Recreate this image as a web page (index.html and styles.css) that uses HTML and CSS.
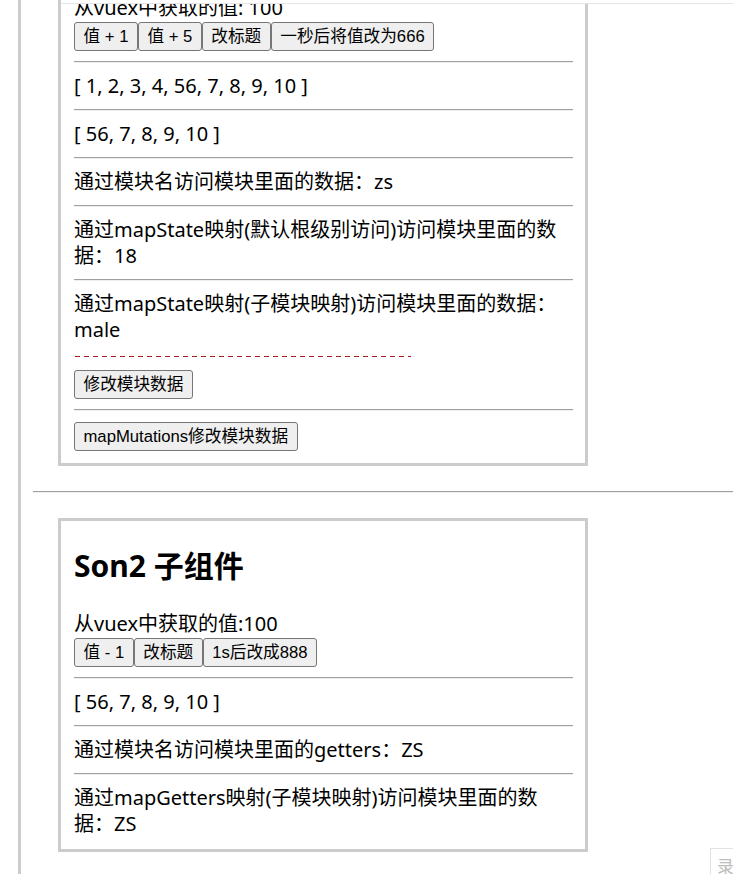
FILE: index.html
```html
<!DOCTYPE html>
<html lang="zh-CN">
<head>
<meta charset="utf-8">
<title>Vuex modules</title>
<link rel="stylesheet" href="styles.css">
</head>
<body>
<div class="topbar"></div>
<div class="page">
  <div class="son first">
    <div class="line">从vuex中获取的值: 100</div>
    <div class="btns"><button>值 + 1</button><button>值 + 5</button><button>改标题</button><button>一秒后将值改为666</button></div>
    <hr>
    <div class="line">[ 1, 2, 3, 4, 56, 7, 8, 9, 10 ]</div>
    <hr>
    <div class="line">[ 56, 7, 8, 9, 10 ]</div>
    <hr>
    <div class="line">通过模块名访问模块里面的数据：zs</div>
    <hr>
    <div class="line">通过mapState映射(默认根级别访问)访问模块里面的数据：18</div>
    <hr>
    <div class="line">通过mapState映射(子模块映射)访问模块里面的数据：male</div>
    <div class="dash"></div>
    <div class="btns"><button>修改模块数据</button></div>
    <hr>
    <div class="btns"><button>mapMutations修改模块数据</button></div>
  </div>
  <hr class="sep">
  <div class="son">
    <h2>Son2 子组件</h2>
    <div class="line">从vuex中获取的值:100</div>
    <div class="btns"><button>值 - 1</button><button>改标题</button><button>1s后改成888</button></div>
    <hr>
    <div class="line">[ 56, 7, 8, 9, 10 ]</div>
    <hr>
    <div class="line">通过模块名访问模块里面的getters：ZS</div>
    <hr>
    <div class="line">通过mapGetters映射(子模块映射)访问模块里面的数据：ZS</div>
  </div>
</div>
<div class="rec">录</div>
</body>
</html>
```
FILE: styles.css
```css
html, body {
  margin: 0;
  padding: 0;
  background: #fff;
}
body {
  font-family: "Noto Sans", "Noto Sans CJK SC", sans-serif;
  font-size: 20px;
  line-height: 26px;
  color: #000;
  overflow: hidden;
}
.topbar {
  position: fixed;
  top: 0;
  left: 61px;
  right: 0;
  height: 3px;
  background: #fff;
  border-bottom: 1px solid #e6e6e6;
  z-index: 5;
}
.page {
  margin-left: 18px;
  border-left: 3px solid #ccc;
  padding-left: 12px;
  min-height: 900px;
}
.son {
  width: 499px;
  margin: 25px 0 25px 25px;
  border: 3px solid #ccc;
  padding: 0 12px 12px 13px;
}
.son.first {
  margin-top: -8px;
}
.line {
  line-height: 26px;
}
h2 {
  margin: 25px 0;
  font-size: 30px;
  line-height: 40px;
  font-weight: bold;
}
hr {
  height: 0;
  margin: 10px 0;
  border: 0;
  border-top: 1px solid #a0a0a0;
  border-bottom: 1px solid #eee;
}
hr.sep {
  margin: 25px 0;
}
.btns {
  display: flex;
  padding-top: 1px;
}
button {
  height: 29px;
  margin: 0;
  padding: 0 8.5px;
  font-family: "Liberation Sans", "Noto Sans CJK SC", sans-serif;
  font-size: 16.67px;
  line-height: 27px;
  color: #000;
  background: #efefef;
  border: 1px solid #767676;
  border-radius: 3px;
}
.dash {
  height: 26px;
  background-image: repeating-linear-gradient(90deg, #a61c1c 0 5px, transparent 5px 9px);
  background-size: 336px 1px;
  background-repeat: no-repeat;
  background-position: 1px 13px;
}
.rec {
  position: fixed;
  left: 710px;
  top: 848px;
  width: 40px;
  height: 40px;
  box-sizing: border-box;
  padding: 7px 0 0 6px;
  border: 1px solid #e2e2e2;
  background: #fff;
  color: #bdbdbd;
  font-family: "Noto Sans CJK SC", sans-serif;
  font-size: 17px;
  line-height: 20px;
}
```
